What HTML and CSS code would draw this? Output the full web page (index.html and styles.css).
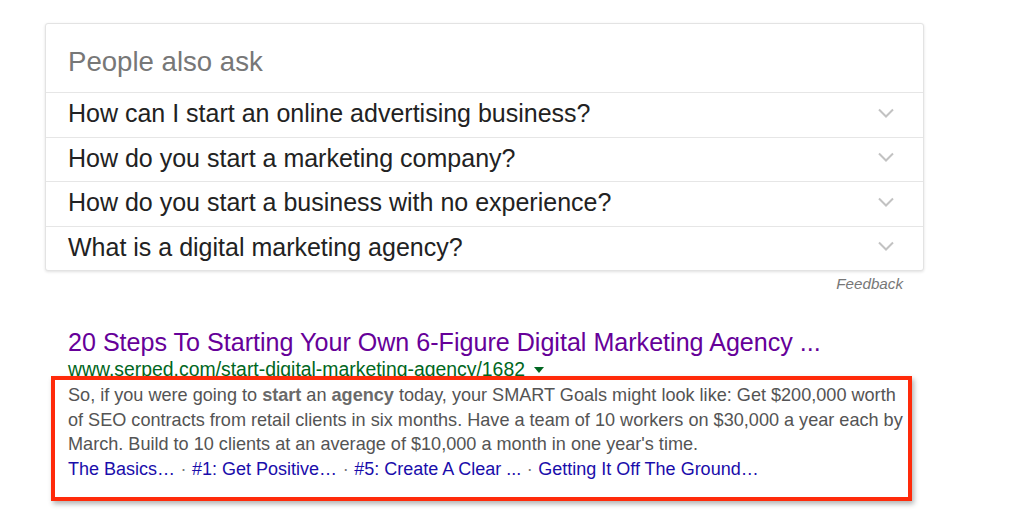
FILE: index.html
```html
<!DOCTYPE html>
<html>
<head>
<meta charset="utf-8">
<link rel="stylesheet" href="styles.css">
</head>
<body>
<div class="page">
  <div class="paa">
    <div class="paa-head">People also ask</div>
    <div class="paa-row"><span class="q">How can I start an online advertising business?</span><svg class="chev" width="16" height="10" viewBox="0 0 16 10"><path d="M1 1.5 L8 8.5 L15 1.5" fill="none" stroke="#c2c2c2" stroke-width="2"/></svg></div>
    <div class="paa-row"><span class="q">How do you start a marketing company?</span><svg class="chev" width="16" height="10" viewBox="0 0 16 10"><path d="M1 1.5 L8 8.5 L15 1.5" fill="none" stroke="#c2c2c2" stroke-width="2"/></svg></div>
    <div class="paa-row"><span class="q">How do you start a business with no experience?</span><svg class="chev" width="16" height="10" viewBox="0 0 16 10"><path d="M1 1.5 L8 8.5 L15 1.5" fill="none" stroke="#c2c2c2" stroke-width="2"/></svg></div>
    <div class="paa-row"><span class="q">What is a digital marketing agency?</span><svg class="chev" width="16" height="10" viewBox="0 0 16 10"><path d="M1 1.5 L8 8.5 L15 1.5" fill="none" stroke="#c2c2c2" stroke-width="2"/></svg></div>
  </div>
  <div class="feedback">Feedback</div>
  <div class="result">
    <div class="title">20 Steps To Starting Your Own 6-Figure Digital Marketing Agency ...</div>
    <div class="url">www.serped.com/start-digital-marketing-agency/1682<span class="arrow"></span></div>
    <div class="highlight">
      <div class="snippet">So, if you were going to <b>start</b> an <b>agency</b> today, your SMART Goals might look like: Get $200,000 worth<br>of SEO contracts from retail clients in six months. Have a team of 10 workers on $30,000 a year each by<br>March. Build to 10 clients at an average of $10,000 a month in one year's time.</div>
      <div class="links"><span class="lnk">The Basics…</span><span class="sep">·</span><span class="lnk">#1: Get Positive…</span><span class="sep">·</span><span class="lnk">#5: Create A Clear ...</span><span class="sep">·</span><span class="lnk">Getting It Off The Ground…</span></div>
    </div>
  </div>
</div>
</body>
</html>
```

FILE: styles.css
```css
html, body {
  margin: 0;
  padding: 0;
  background: #ffffff;
}
body {
  font-family: "Liberation Sans", Arial, sans-serif;
  width: 1024px;
  height: 518px;
  overflow: hidden;
}
.page {
  padding: 23px 0 0 45px;
  width: 879px;
}
.paa {
  border: 1px solid #e3e3e3;
  border-radius: 3px;
  box-shadow: 0 1px 3px rgba(0,0,0,0.12);
  background: #fff;
}
.paa-head {
  font-size: 27.6px;
  line-height: 32px;
  color: #777777;
  padding: 22px 0 14px 22px;
}
.paa-row {
  display: flex;
  align-items: center;
  justify-content: space-between;
  border-top: 1px solid #e6e6e6;
  height: 43.5px;
  padding: 0 29px 0 22px;
}
.paa-row .q {
  font-size: 25px;
  line-height: 40px;
  color: #222222;
  align-self: flex-start;
}
.chev {
  display: block;
  margin-bottom: 4px;
}
.feedback {
  text-align: right;
  font-style: italic;
  font-size: 15.2px;
  line-height: 18px;
  color: #777777;
  margin-top: 4px;
  padding-right: 21px;
}
.result {
  margin-top: 34px;
}
.title {
  font-size: 25.1px;
  line-height: 30px;
  color: #660099;
  padding-left: 23px;
  white-space: nowrap;
}
.url {
  font-size: 19.4px;
  line-height: 24px;
  color: #006621;
  padding-left: 23px;
  white-space: nowrap;
}
.arrow {
  display: inline-block;
  width: 0;
  height: 0;
  border-left: 5px solid transparent;
  border-right: 5px solid transparent;
  border-top: 6px solid #006621;
  margin-left: 9px;
  vertical-align: 3px;
}
.highlight {
  position: relative;
  margin: -5px 0 0 6px;
  width: 840px;
  border: 4px solid #ff2a0a;
  padding: 3px 0 15px 13px;
  box-shadow: 2px 3px 5px rgba(0,0,0,0.3);
}
.snippet {
  font-size: 18.1px;
  line-height: 24.5px;
  color: #545454;
  white-space: nowrap;
}
.snippet b {
  color: #6a6a6a;
}
.links {
  font-size: 18px;
  line-height: 25px;
  color: #1a0dab;
  white-space: nowrap;
}
.sep {
  color: #777;
  padding: 0 5.5px;
}
```
